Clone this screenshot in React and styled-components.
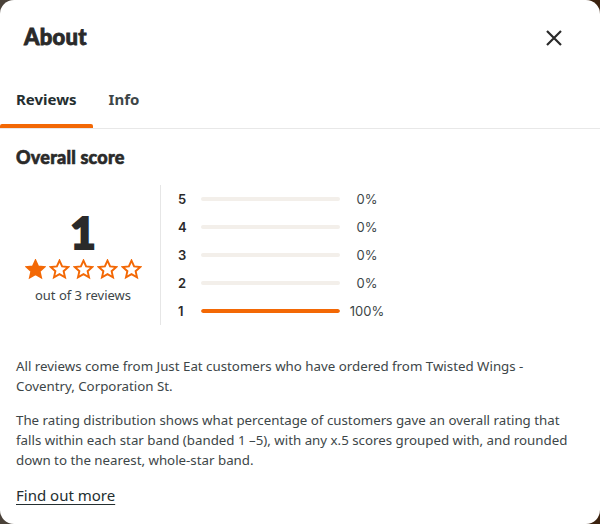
import React from 'react';
import styled, { createGlobalStyle } from 'styled-components';

const GlobalStyle = createGlobalStyle`
  html, body {
    margin: 0;
    padding: 0;
    height: 100%;
  }
  body {
    background: linear-gradient(90deg, #4a4239 0%, #5a5048 50%, #3b220f 100%);
    font-family: "Noto Sans", "Open Sans", sans-serif;
    color: #242e30;
  }
  #root {
    height: 100%;
  }
`;

const ORANGE = '#f36805';

const Modal = styled.div`
  height: 524px;
  box-sizing: border-box;
  background: #fff;
  border-radius: 14px;
  display: flex;
  flex-direction: column;
  overflow: hidden;
`;

const Header = styled.header`
  display: flex;
  align-items: center;
  justify-content: space-between;
  height: 72px;
  padding: 0 36px 0 24px;
`;

const Title = styled.h1`
  margin: 0;
  font-family: Lato, "Noto Sans", sans-serif;
  font-weight: 900;
  font-size: 22px;
  letter-spacing: 0.3px;
  color: #2a2a2a;
  -webkit-text-stroke: 0.8px #2a2a2a;
`;

const CloseButton = styled.button`
  border: 0;
  background: none;
  padding: 0;
  margin-top: 4px;
  width: 20px;
  height: 20px;
  display: flex;
  align-items: center;
  justify-content: center;
  cursor: pointer;
`;

const Tabs = styled.nav`
  display: flex;
  height: 56px;
  border-bottom: 1px solid #e8e8e8;
`;

const Tab = styled.button`
  border: 0;
  background: none;
  padding: 0 16px 2px;
  font-family: "Noto Sans", sans-serif;
  font-size: 15px;
  font-weight: 700;
  color: ${(p) => (p.active ? '#242e30' : '#3d4648')};
  position: relative;
  cursor: pointer;

  &::after {
    content: '';
    position: absolute;
    left: 0;
    right: 0;
    bottom: 0;
    height: 4px;
    border-radius: 2px 2px 0 0;
    background: ${(p) => (p.active ? ORANGE : 'transparent')};
  }
`;

const Body = styled.section`
  padding: 16px 16px 0;
`;

const SubTitle = styled.h2`
  margin: 0 0 16px;
  font-family: Lato, "Noto Sans", sans-serif;
  font-weight: 900;
  font-size: 18px;
  line-height: 24px;
  letter-spacing: 0.2px;
  color: #2a2a2a;
  -webkit-text-stroke: 0.6px #2a2a2a;
`;

const ScoreRow = styled.div`
  display: flex;
  align-items: stretch;
`;

const ScoreBox = styled.div`
  width: 134px;
  padding-right: 10px;
  display: flex;
  flex-direction: column;
  align-items: center;
  justify-content: center;
  border-right: 1px solid #e6e6e6;
`;

const BigScore = styled.div`
  font-family: Lato, "Noto Sans", sans-serif;
  font-weight: 900;
  font-size: 44px;
  line-height: 44px;
  color: #2a2a2a;
  -webkit-text-stroke: 2px #2a2a2a;
  margin-top: 4px;
`;

const Stars = styled.div`
  display: flex;
  gap: 3px;
  margin-top: 5px;
`;

const ReviewCount = styled.div`
  margin-top: 6px;
  font-size: 13px;
  color: #3d4648;
`;

const Bars = styled.div`
  display: flex;
  flex-direction: column;
  padding-left: 17px;
`;

const BarRow = styled.div`
  display: flex;
  align-items: center;
  height: 28px;
  font-family: Inter, "Noto Sans", sans-serif;
  font-size: 13px;
  color: #2a2a2a;
`;

const BarLabel = styled.span`
  width: 23px;
  font-weight: 600;
`;

const Track = styled.div`
  width: 139px;
  height: 4px;
  border-radius: 2px;
  background: #f3efea;
  overflow: hidden;
`;

const Fill = styled.div`
  height: 100%;
  border-radius: 2px;
  background: ${ORANGE};
`;

const Percent = styled.span`
  width: 44px;
  margin-left: 5px;
  text-align: center;
  font-weight: 400;
  color: #3d4648;
`;

const Text = styled.p`
  margin: 0 0 14px;
  font-size: 13.3px;
  line-height: 20px;
  color: #3d4648;
`;

const Info = styled.div`
  margin-top: 31px;
`;

const MoreLink = styled.a`
  display: inline-block;
  margin-top: 1px;
  font-size: 15px;
  color: #242e30;
  text-decoration: underline;
  text-underline-offset: 3px;
`;

const STAR = 'M12 1.8l3 6.6 7.1.7-5.4 4.8 1.6 7L12 17.3l-6.3 3.6 1.6-7-5.4-4.8 7.1-.7z';

const Star = ({ filled }) => (
  <svg width="21" height="21" viewBox="0 0 24 24">
    <path
      d={STAR}
      fill={filled ? ORANGE : 'none'}
      stroke={ORANGE}
      strokeWidth="2.2"
      strokeLinejoin="miter"
    />
  </svg>
);

const distribution = [
  { band: 5, pct: 0 },
  { band: 4, pct: 0 },
  { band: 3, pct: 0 },
  { band: 2, pct: 0 },
  { band: 1, pct: 100 },
];

export default function App() {
  return (
    <>
      <GlobalStyle />
      <Modal>
        <Header>
          <Title>About</Title>
          <CloseButton aria-label="Close">
            <svg width="16" height="16" viewBox="0 0 16 16">
              <path d="M1 1l14 14M15 1L1 15" stroke="#2a2a2a" strokeWidth="2.2" />
            </svg>
          </CloseButton>
        </Header>
        <Tabs>
          <Tab active>Reviews</Tab>
          <Tab>Info</Tab>
        </Tabs>
        <Body>
          <SubTitle>Overall score</SubTitle>
          <ScoreRow>
            <ScoreBox>
              <BigScore>1</BigScore>
              <Stars>
                {[1, 2, 3, 4, 5].map((n) => (
                  <Star key={n} filled={n <= 1} />
                ))}
              </Stars>
              <ReviewCount>out of 3 reviews</ReviewCount>
            </ScoreBox>
            <Bars>
              {distribution.map((d) => (
                <BarRow key={d.band}>
                  <BarLabel>{d.band}</BarLabel>
                  <Track>
                    <Fill style={{ width: `${d.pct}%` }} />
                  </Track>
                  <Percent>{d.pct}%</Percent>
                </BarRow>
              ))}
            </Bars>
          </ScoreRow>
          <Info>
            <Text>
              All reviews come from Just Eat customers who have ordered from Twisted Wings -
              Coventry, Corporation St.
            </Text>
            <Text>
              The rating distribution shows what percentage of customers gave an overall rating
              that falls within each star band (banded 1 –5), with any x.5 scores grouped with, and
              rounded down to the nearest, whole-star band.
            </Text>
            <MoreLink href="#">Find out more</MoreLink>
          </Info>
        </Body>
      </Modal>
    </>
  );
}
